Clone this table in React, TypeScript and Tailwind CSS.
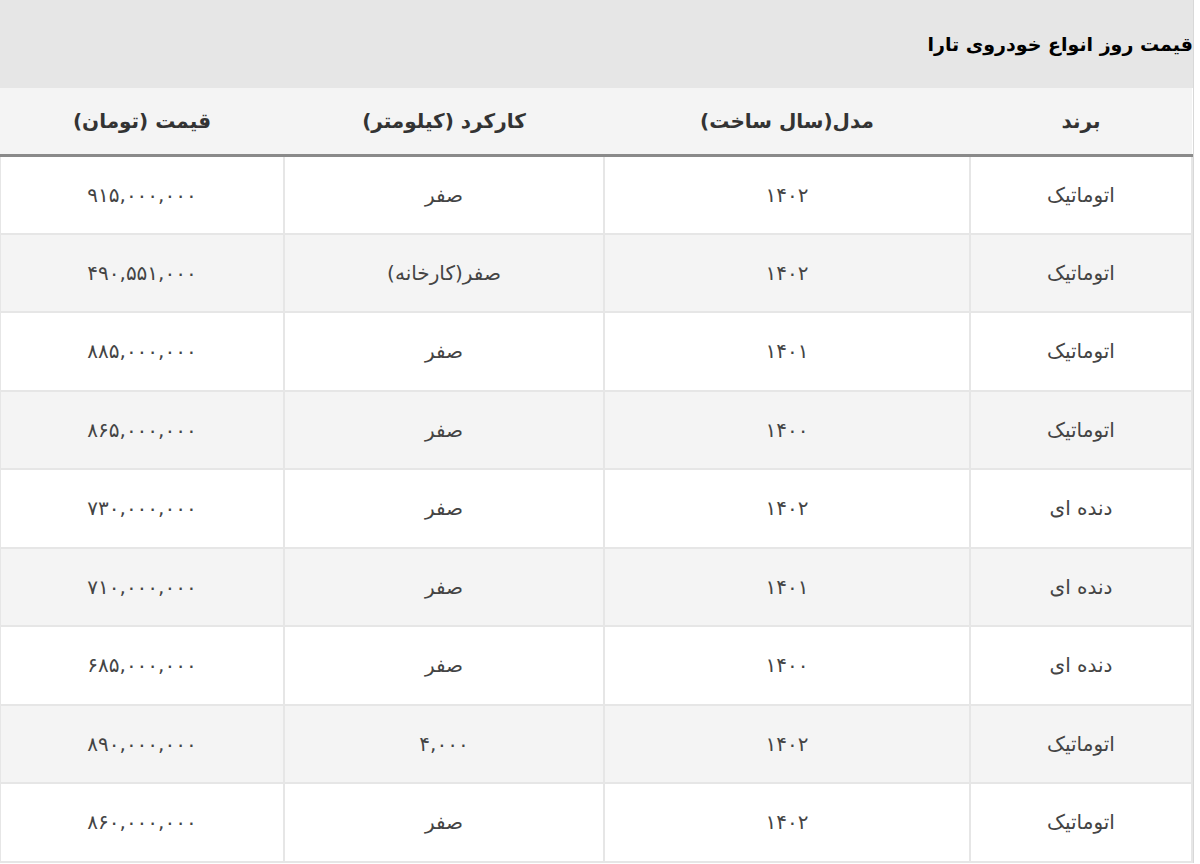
const rows = [
  ["اتوماتیک", "۱۴۰۲", "صفر", "۹۱۵,۰۰۰,۰۰۰"],
  ["اتوماتیک", "۱۴۰۲", "صفر(کارخانه)", "۴۹۰,۵۵۱,۰۰۰"],
  ["اتوماتیک", "۱۴۰۱", "صفر", "۸۸۵,۰۰۰,۰۰۰"],
  ["اتوماتیک", "۱۴۰۰", "صفر", "۸۶۵,۰۰۰,۰۰۰"],
  ["دنده ای", "۱۴۰۲", "صفر", "۷۳۰,۰۰۰,۰۰۰"],
  ["دنده ای", "۱۴۰۱", "صفر", "۷۱۰,۰۰۰,۰۰۰"],
  ["دنده ای", "۱۴۰۰", "صفر", "۶۸۵,۰۰۰,۰۰۰"],
  ["اتوماتیک", "۱۴۰۲", "۴,۰۰۰", "۸۹۰,۰۰۰,۰۰۰"],
  ["اتوماتیک", "۱۴۰۲", "صفر", "۸۶۰,۰۰۰,۰۰۰"],
];

const headers = ["برند", "مدل(سال ساخت)", "کارکرد (کیلومتر)", "قیمت (تومان)"];
const widths = ["w-[222px]", "w-[366px]", "w-[320px]", "w-[284px]"];

export default function App() {
  return (
    <div
      className="min-h-[864px] bg-white"
      style={{ fontFamily: '"DejaVu Sans", "Noto Sans", sans-serif' }}
    >
      <div dir="rtl" className="w-[1194px] border-l-0 border-r border-[#d8d8d8]">
        <div className="flex h-[88px] items-center bg-[#e6e6e6] text-[19px] font-bold text-black">
          قیمت روز انواع خودروی تارا
        </div>
        <table className="w-[1192px] table-fixed border-collapse text-[#444]">
          <thead>
            <tr className="h-[67px] border-b-[3px] border-[#8a8a8a] bg-[#f4f4f4]">
              {headers.map((h, i) => (
                <th key={h} className={`${widths[i]} text-center text-[20px] font-bold text-[#333]`}>
                  {h}
                </th>
              ))}
            </tr>
          </thead>
          <tbody>
            {rows.map((r, ri) => (
              <tr
                key={ri}
                className={`h-[78.5px] ${ri % 2 === 0 ? "bg-white" : "bg-[#f4f4f4]"}`}
              >
                {r.map((c, ci) => (
                  <td
                    key={ci}
                    className="border-2 border-[#e6e6e6] text-center text-[20px]"
                  >
                    {c}
                  </td>
                ))}
              </tr>
            ))}
          </tbody>
        </table>
      </div>
    </div>
  );
}
